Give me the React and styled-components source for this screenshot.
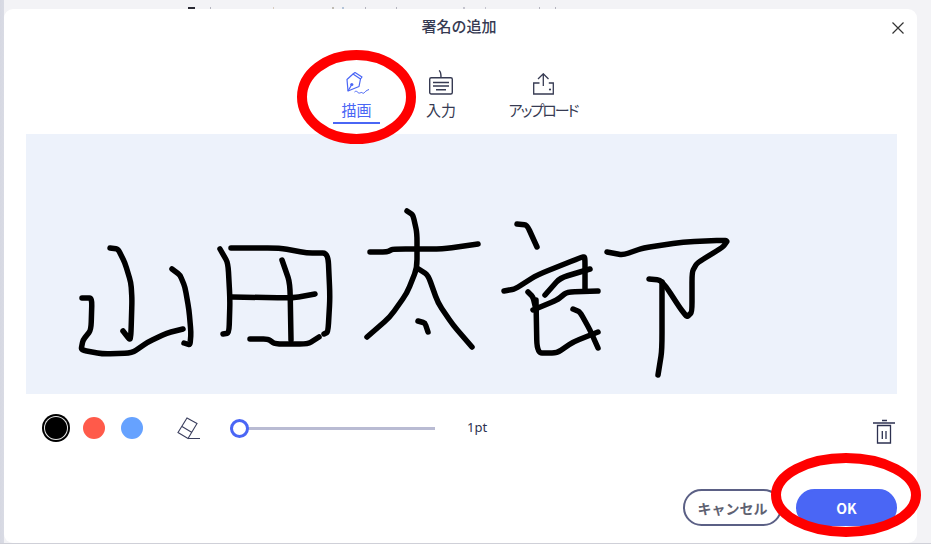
import React from "react";
import styled, { createGlobalStyle } from "styled-components";

const font = `"Noto Sans CJK JP", "Noto Sans", sans-serif`;

const Global = createGlobalStyle`
  html, body { margin: 0; padding: 0; }
  body { width: 931px; height: 544px; overflow: hidden; background: #f4f4f7; font-family: ${font}; }
`;

const Page = styled.div`
  position: relative;
  width: 931px;
  height: 544px;
  overflow: hidden;
  background:
    linear-gradient(#cfd0d8, #cfd0d8) 0 100% / 100% 1px no-repeat,
    linear-gradient(90deg, #d6d8e2 0, #d9dbe4 4px, #f3f3f6 4px);
  padding: 9px 14px 1px 4px;
  box-sizing: border-box;
`;

const Residue = styled.div`
  position: absolute;
  left: 0;
  top: 7px;
  width: 931px;
  height: 2px;
  background:
    linear-gradient(#2a2a34, #2a2a34) 188px 0 / 7px 2px no-repeat,
    linear-gradient(#b4b4be, #b4b4be) 210px 0 / 1px 2px no-repeat,
    linear-gradient(#d8ccc0, #d8ccc0) 273px 0 / 1px 2px no-repeat,
    linear-gradient(#c0bcb4, #c0bcb4) 332px 0 / 2px 2px no-repeat,
    linear-gradient(#b4c4d8, #b4c4d8) 342px 0 / 2px 2px no-repeat,
    linear-gradient(#b4b4be, #b4b4be) 365px 0 / 1px 2px no-repeat,
    linear-gradient(#b4b4be, #b4b4be) 396px 0 / 1px 2px no-repeat,
    linear-gradient(#c4c4ce, #c4c4ce) 463px 0 / 2px 2px no-repeat,
    linear-gradient(#c4c4ce, #c4c4ce) 485px 0 / 1px 2px no-repeat,
    linear-gradient(#b4b4be, #b4b4be) 539px 0 / 1px 2px no-repeat,
    linear-gradient(#b4b4be, #b4b4be) 555px 0 / 1px 2px no-repeat;
`;

const Dialog = styled.div`
  position: relative;
  width: 913px;
  height: 534px;
  background: #fff;
  border-radius: 9px;
  display: flex;
  flex-direction: column;
  box-sizing: border-box;
  padding: 0 20px 0 22px;
  color: #2d3150;
`;

const Header = styled.header`
  height: 34px;
  display: flex;
  align-items: center;
  justify-content: center;
  padding-right: 5px;
  position: relative;
`;

const Title = styled.h1`
  margin: 0;
  font-size: 15px;
  line-height: 20px;
  font-weight: 500;
  color: #363a52;
`;

const Close = styled.button`
  position: absolute;
  right: -8px;
  top: 12px;
  width: 14px;
  height: 14px;
  padding: 0;
  border: 0;
  background: none;
  color: #333;
  svg { display: block; }
`;

const Tabs = styled.nav`
  height: 91px;
  display: flex;
  padding-left: 307px;
  box-sizing: border-box;
`;

const Tab = styled.div`
  flex: none;
  width: ${(p) => p.$w}px;
  margin-right: ${(p) => p.$gap}px;
  height: 81px;
  padding-top: 27px;
  box-sizing: border-box;
  display: flex;
  flex-direction: column;
  align-items: center;
  color: ${(p) => (p.$active ? "#4a66f5" : "#363a52")};
  border-bottom: 2px solid ${(p) => (p.$active ? "#4a66f5" : "transparent")};
`;

const IconBox = styled.div`
  height: 25px;
  display: flex;
  align-items: flex-end;
  margin-bottom: 5px;
  svg { display: block; flex: none; }
`;

const TabLabel = styled.span`
  font-size: 15px;
  line-height: 20px;
  white-space: nowrap;
  font-feature-settings: "palt";
  letter-spacing: ${(p) => p.$ls || 0}px;
`;

const Canvas = styled.div`
  width: 871px;
  height: 260px;
  background: #edf2fb;
  svg { display: block; }
`;

const Tools = styled.div`
  height: 68px;
  display: flex;
  align-items: center;
  padding: 0 2px 0 19px;
  box-sizing: border-box;
`;

const Swatch = styled.span`
  width: 22px;
  height: 22px;
  border-radius: 50%;
  background: ${(p) => p.$c};
  margin-right: ${(p) => p.$mr}px;
  flex: none;
  ${(p) => p.$selected && `box-shadow: 0 0 0 1px #e8e8e8, 0 0 0 3px #000;`}
`;

const EraserIcon = styled.svg`
  flex: none;
  margin: 0 29px 0 0;
  display: block;
`;

const Slider = styled.div`
  width: 205px;
  height: 3px;
  background: #b9bbd3;
  position: relative;
  flex: none;
`;

const Thumb = styled.span`
  position: absolute;
  left: 0;
  top: -8px;
  width: 19px;
  height: 19px;
  box-sizing: border-box;
  border-radius: 50%;
  border: 3px solid #4a66f5;
  background: #fff;
`;

const Size = styled.span`
  margin: 0 0 2px 32px;
  font-size: 13px;
  color: #2d3150;
  font-family: "Noto Sans", sans-serif;
`;

const Trash = styled.svg`
  margin-left: auto;
  margin-top: 7px;
  display: block;
  flex: none;
`;

const Footer = styled.footer`
  display: flex;
  justify-content: flex-end;
  gap: 14px;
  padding-top: 27px;
`;

const Btn = styled.button`
  width: ${(p) => p.$w}px;
  height: 37px;
  border-radius: 19px;
  box-sizing: border-box;
  font-family: ${font};
  font-size: 14px;
  font-weight: 700;
  padding: 0;
  border: 2px solid ${(p) => (p.$primary ? "#4a66f5" : "#5b6085")};
  background: ${(p) => (p.$primary ? "#4a66f5" : "#fff")};
  color: ${(p) => (p.$primary ? "#fff" : "#5f6272")};
`;

const Mark = styled.svg`
  position: absolute;
  left: 0;
  top: 0;
  pointer-events: none;
`;

const strokes = [
  [[110,248],[118,249],[125,263],[131,283],[132,300],[131,333],[130,340],[123,331]],
  [[172,269],[180,275],[185,287],[189,310],[191,333],[190,345],[184,343]],
  [[82,298],[92,298],[91,330],[83,340],[81,350],[103,354],[132,353],[148,342],[167,333],[183,329]],
  [[220,249],[228,263],[230,300],[229,333],[223,334]],
  [[231,248],[280,248],[307,253],[328,253],[330,297],[328,332],[324,334]],
  [[232,297],[293,298],[315,294]],
  [[282,260],[290,283],[291,340]],
  [[250,339],[268,339],[275,344],[308,344],[319,337]],
  [[407,211],[413,215],[417,233],[417,268],[407,293],[390,317],[367,337]],
  [[370,252],[387,252],[393,249],[443,249],[478,244]],
  [[417,268],[428,275],[438,303],[453,325],[472,347]],
  [[418,321],[425,323],[428,332]],
  [[517,224],[527,225],[537,247]],
  [[504,291],[515,289],[537,275],[582,257],[585,257],[585,290]],
  [[545,295],[560,278],[590,269]],
  [[528,292],[533,297],[536,310]],
  [[533,310],[557,300],[567,292],[598,291]],
  [[536,300],[537,353],[557,353],[573,342],[598,332]],
  [[573,309],[580,312],[590,330],[598,348]],
  [[607,252],[623,255],[643,248],[683,242],[728,240],[723,247],[697,263],[692,272],[692,312],[687,317],[680,308],[667,288],[660,280],[649,279]],
  [[662,282],[662,350],[658,375]],
];

const toPath = (pts) => {
  const k = 0.25;
  let d = `M${pts[0][0]} ${pts[0][1]}`;
  for (let i = 1; i < pts.length - 1; i++) {
    const [px, py] = pts[i - 1];
    const [x, y] = pts[i];
    const [nx, ny] = pts[i + 1];
    d += ` L${x - (x - px) * k} ${y - (y - py) * k}`;
    d += ` Q${x} ${y} ${x + (nx - x) * k} ${y + (ny - y) * k}`;
  }
  const l = pts[pts.length - 1];
  return d + ` L${l[0]} ${l[1]}`;
};

export default function App() {
  return (
    <>
      <Global />
      <Page>
        <Residue />
        <Dialog>
          <Header>
            <Title>署名の追加</Title>
            <Close aria-label="close">
              <svg width="14" height="14" viewBox="0 0 14 14" fill="none" stroke="currentColor" strokeWidth="1.2">
                <path d="M1.5 1.5l11 11M12.5 1.5l-11 11" />
              </svg>
            </Close>
          </Header>
          <Tabs>
            <Tab $active $w={47} $gap={31}>
              <IconBox>
                <svg width="26" height="24" viewBox="-1 0 26 24" fill="none" stroke="currentColor" strokeWidth="1.2" strokeLinejoin="round">
                  <path d="M8 3l2-1.500 7 4.500-1.500 2z" />
                  <path d="M8 3 2 8.500 3 20l11-4.500L15.500 8" />
                  <path d="M3 20l3.500-6" />
                  <circle cx="6.800" cy="13.500" r="1.600" fill="currentColor" stroke="none" />
                  <path d="M9.500 21c1.500-1.500 2.500-.5 3.500.5s2 .5 3 0 2 1.500 3 .5 2-2.500 5-3.500" strokeWidth="1" />
                </svg>
              </IconBox>
              <TabLabel>描画</TabLabel>
            </Tab>
            <Tab $w={60} $gap={27}>
              <IconBox>
                <svg width="24" height="25" viewBox="0 0 24 25" fill="none" stroke="currentColor" strokeWidth="1.4">
                  <rect x="0.700" y="7.700" width="22.600" height="16.300" rx="1.500" />
                  <path d="M10 .5c1.500.8 2 3 2 7M4 12.500h16M4 16h16M7 19.800h10" />
                </svg>
              </IconBox>
              <TabLabel>入力</TabLabel>
            </Tab>
            <Tab $w={90} $gap={0}>
              <IconBox>
                <svg width="21" height="22" viewBox="0 0 21 22" fill="none" stroke="currentColor" strokeWidth="1.3">
                  <path d="M6.500 10H.7v11h19.600V10h-4.500M10.300 13V1M5 6l5.300-5.200L15.500 6" />
                  <circle cx="17" cy="16.500" r="1.100" fill="currentColor" stroke="none" />
                </svg>
              </IconBox>
              <TabLabel $ls={-2}>アップロード</TabLabel>
            </Tab>
          </Tabs>
          <Canvas>
            <svg width="871" height="260" viewBox="26 134 871 260" fill="none" stroke="#000" strokeWidth="5.500" strokeLinecap="round" strokeLinejoin="round">
              {strokes.map((s, i) => (
                <path key={i} d={toPath(s)} />
              ))}
            </svg>
          </Canvas>
          <Tools>
            <Swatch $c="#000" $selected $mr={16} />
            <Swatch $c="#ff5a4a" $mr={16} />
            <Swatch $c="#66a2ff" $mr={34} />
            <EraserIcon width="24" height="24" viewBox="0 0 24 24" fill="none" stroke="#3b3f5e" strokeWidth="1.100">
              <path d="M10 2l10 5.500-9 15-10-6zM5 10.500l10 6M11 22.500h12" />
            </EraserIcon>
            <Slider>
              <Thumb />
            </Slider>
            <Size>1pt</Size>
            <Trash width="22" height="25" viewBox="0 0 22 25" fill="none" stroke="#2d3150" strokeWidth="1.300">
              <path d="M0 4h22M9 1.500h5" />
              <path d="M4.500 6.500h13v17.500h-13zM9.300 12v8M13 12v8" />
            </Trash>
          </Tools>
          <Footer>
            <Btn $w={99}>キャンセル</Btn>
            <Btn $primary $w={101}>OK</Btn>
          </Footer>
        </Dialog>
        <Mark width="931" height="544" viewBox="0 0 931 544" fill="none" stroke="#ff0000" strokeWidth="10">
          <ellipse cx="356.500" cy="97" rx="54.500" ry="42" />
          <ellipse cx="846" cy="495" rx="70" ry="37" />
        </Mark>
      </Page>
    </>
  );
}
